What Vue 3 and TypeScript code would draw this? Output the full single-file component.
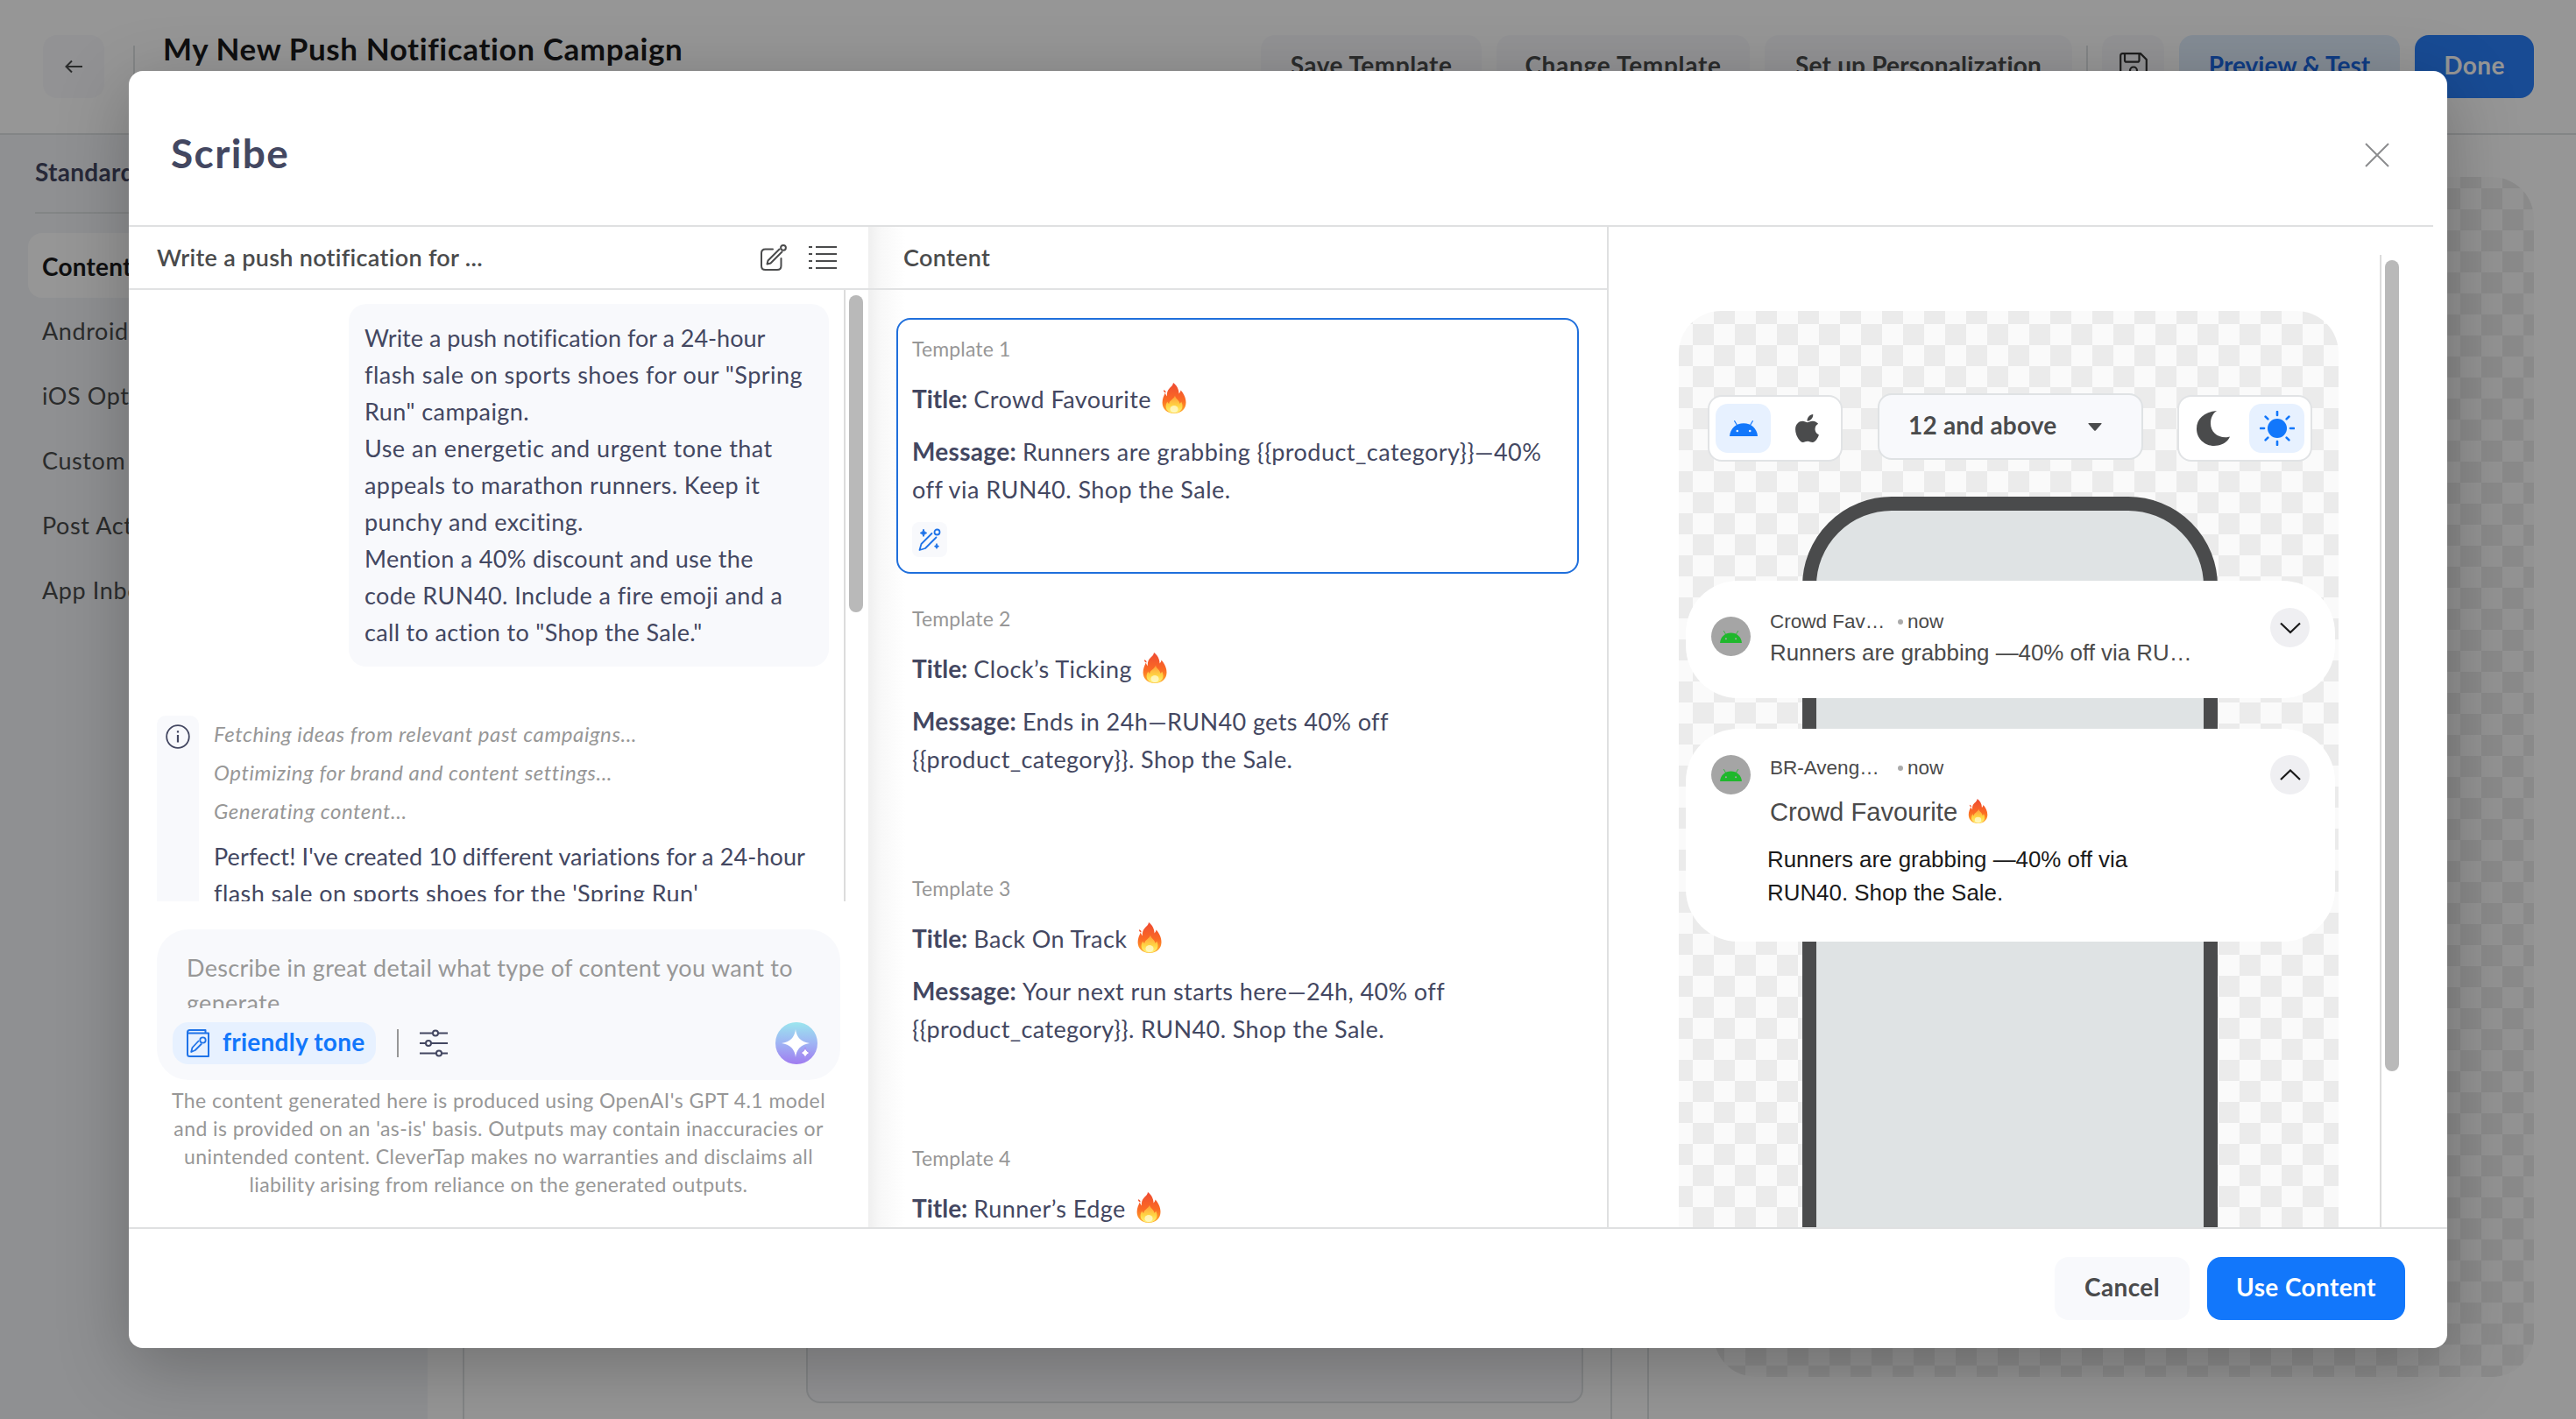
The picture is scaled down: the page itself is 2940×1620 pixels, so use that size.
<script setup lang="ts">
import { h, type FunctionalComponent } from 'vue'

interface Template {
  id: number
  title: string
  message: string[]
}

const sideItems: string[] = ['Content', 'Android', 'iOS Options', 'Custom Key Value', 'Post Action', 'App Inbox']

const prompt: string[] = [
  'Write a push notification for a 24-hour',
  'flash sale on sports shoes for our "Spring',
  'Run" campaign.',
  'Use an energetic and urgent tone that',
  'appeals to marathon runners. Keep it',
  'punchy and exciting.',
  'Mention a 40% discount and use the',
  'code RUN40. Include a fire emoji and a',
  'call to action to "Shop the Sale."',
]

const steps: string[] = [
  'Fetching ideas from relevant past campaigns...',
  'Optimizing for brand and content settings...',
  'Generating content...',
]

const reply: string[] = [
  "Perfect! I've created 10 different variations for a 24-hour",
  "flash sale on sports shoes for the 'Spring Run'",
]

const disclaimer: string[] = [
  "The content generated here is produced using OpenAI's GPT 4.1 model",
  "and is provided on an 'as-is' basis. Outputs may contain inaccuracies or",
  'unintended content. CleverTap makes no warranties and disclaims all',
  'liability arising from reliance on the generated outputs.',
]

const templates: Template[] = [
  { id: 1, title: 'Crowd Favourite', message: ['Runners are grabbing {{product_category}}—40%', 'off via RUN40. Shop the Sale.'] },
  { id: 2, title: 'Clock’s Ticking', message: ['Ends in 24h—RUN40 gets 40% off', '{{product_category}}. Shop the Sale.'] },
  { id: 3, title: 'Back On Track', message: ['Your next run starts here—24h, 40% off', '{{product_category}}. RUN40. Shop the Sale.'] },
  { id: 4, title: 'Runner’s Edge', message: [] },
]
const selectedId = 1

const rays: number[] = [0, 45, 90, 135, 180, 225, 270, 315]

const Flame: FunctionalComponent = () =>
  h('svg', { viewBox: '0 0 28 35', 'aria-label': 'fire' }, [
    h('path', { fill: 'url(#flameOuter)', d: 'M13 0c3.600 2.500 6.400 7 6.600 12.400 1-.9 1.700-2.200 1.900-3.800 3.200 3.400 6 8.500 6 14.200C27.500 30 22 35 14 35S.6 30 .6 22.800c0-4.600 1.800-7.900 3.200-11.200.6 1.700 1.200 3 2.200 3.800C5.400 11.600 6.500 8.400 9 6c2.200-2 3.700-3.600 4-6z' }),
    h('path', { fill: '#f4552f', d: 'M2 8.300c1.900.6 2.900 1.600 2.500 3.300-1.800-.7-2.800-1.800-2.500-3.300z' }),
    h('path', { fill: 'url(#flameInner)', d: 'M15 14.500c.4 3.700 4.900 5 5.400 9.200 1-.4 1.500-1.200 1.700-2.200 1.300 2.300 1.700 4.300 1.300 6.500-.7 4-4.400 6.600-9.400 6.600-5.500 0-9.100-2.900-9.400-7.100-.1-2 .5-4 1.800-6 .3 1.300.9 2.100 1.900 2.500-.2-3.900 5.700-5.200 6.700-9.500z' }),
    h('ellipse', { fill: '#fffbd6', opacity: 0.75, cx: 14, cy: 30, rx: 4.6, ry: 4 }),
  ])

const Android: FunctionalComponent<{ eye: string }> = (props) =>
  h('svg', { viewBox: '0 0 32 18' }, [
    h('path', { fill: 'currentColor', d: 'M0 18C.6 9 7.500 3.200 16 3.200S31.400 9 32 18z' }),
    h('path', { stroke: 'currentColor', 'stroke-width': 1.1, 'stroke-linecap': 'round', d: 'M5.600.6l3.100 5.200M26.400.6l-3.100 5.200' }),
    h('circle', { fill: props.eye, cx: 8.8, cy: 12, r: 1.3 }),
    h('circle', { fill: props.eye, cx: 23.2, cy: 12, r: 1.3 }),
  ])
Android.props = ['eye']
</script>

<template>
  <div class="screen">
    <svg class="defs" width="0" height="0">
      <defs>
        <linearGradient id="flameOuter" x1="0" y1="0" x2="0" y2="1">
          <stop offset="0" stop-color="#ee4a33" />
          <stop offset=".55" stop-color="#fb6a24" />
          <stop offset="1" stop-color="#ffae2b" />
        </linearGradient>
        <linearGradient id="flameInner" x1="0" y1="0" x2="0" y2="1">
          <stop offset="0" stop-color="#ff9a3a" />
          <stop offset=".6" stop-color="#ffd644" />
          <stop offset="1" stop-color="#fff27a" />
        </linearGradient>
        <linearGradient id="orb" x1="0" y1="0" x2="0" y2="1">
          <stop offset="0" stop-color="#9be6ee" />
          <stop offset=".5" stop-color="#9fb4f4" />
          <stop offset="1" stop-color="#a07cf0" />
        </linearGradient>
      </defs>
    </svg>

    <!-- editor page behind the dialog -->
    <header class="topbar">
      <button class="sq back">
        <svg viewBox="0 0 20 16" width="20" height="16" fill="none" stroke="#4a4b4c" stroke-width="2"><path d="M8 1.500L1.500 8 8 14.500M1.500 8H20" /></svg>
      </button>
      <i class="vsep" />
      <h1>My New Push Notification Campaign</h1>
      <div class="actions">
        <button class="b1">Save Template</button>
        <button class="b2">Change Template</button>
        <button class="b3">Set up Personalization</button>
        <i class="vsep" />
        <button class="sq">
          <svg viewBox="0 0 32 32" width="32" height="32" fill="none" stroke="#333" stroke-width="2.200"><path d="M1.200 3.500Q1.200 1.200 3.500 1.200H24L30.800 8v20.500q0 2.300-2.300 2.300h-25q-2.300 0-2.300-2.300zM6 1.200v7.500q0 2 2 2h12.500q2 0 2-2V1.200" /><circle cx="16" cy="20.500" r="4" /></svg>
        </button>
        <button class="preview">Preview &amp; Test</button>
        <button class="done">Done</button>
      </div>
    </header>
    <div class="page">
      <nav class="side">
        <h2>Standard</h2>
        <a v-for="(s, i) in sideItems" :key="s" :class="{ on: i === 0 }">{{ s }}</a>
      </nav>
      <div class="editor"><div class="field" /></div>
      <div class="gutter" />
      <div class="stage"><div class="checker" /></div>
    </div>

    <!-- dialog -->
    <div class="overlay">
      <section class="modal">
        <header class="mhead">
          <h2>Scribe</h2>
          <svg viewBox="0 0 28 28" width="28" height="28" fill="none" stroke="#8b8c8e" stroke-width="2"><path d="M1 1l26 26M27 1L1 27" /></svg>
        </header>

        <div class="body">
          <div class="chatcol">
            <div class="sub">
              <span class="subt">Write a push notification for ...</span>
              <svg class="compose" viewBox="0 0 32 32" width="32" height="32" fill="none" stroke="#4a4b4c" stroke-width="2" stroke-linejoin="round" stroke-linecap="round"><path d="M15 6.500H6.500Q2 6.500 2 11v14.500Q2 30 6.500 30H20q4.500 0 4.500-4.500V17M22.500 6.500L9.500 19.500 8.500 23.500l4-1L25.500 9.500" /><circle cx="27" cy="4.800" r="2.900" /></svg>
              <svg viewBox="0 0 32 28" width="32" height="28" stroke="#4a4b4c" stroke-width="2.200"><path d="M0 2h4M8 2h24M0 10h4M8 10h24M0 18h4M8 18h24M0 26h4M8 26h24" /></svg>
            </div>
            <div class="scroll">
              <div class="chat">
                <div class="bubble"><p v-for="l in prompt" :key="l">{{ l }}</p></div>
                <div class="answer">
                  <div class="strip">
                    <svg viewBox="0 0 28 28" width="28" height="28" fill="none" stroke="#434761" stroke-width="1.800"><circle cx="14" cy="14" r="12.800" /><path d="M14 12v8.500M14 7.200v2.400" stroke-width="2.200" /></svg>
                  </div>
                  <div>
                    <p v-for="l in steps" :key="l" class="step">{{ l }}</p>
                    <div class="reply"><p v-for="l in reply" :key="l">{{ l }}</p></div>
                  </div>
                </div>
              </div>
              <div class="track"><i /></div>
            </div>
            <div class="composer">
              <div class="ph"><p>Describe in great detail what type of content you want to</p><p>generate</p></div>
              <div class="tools">
                <span class="chip">
                  <svg viewBox="0 0 26 32" width="26" height="32" fill="none" stroke="#1f73e8" stroke-width="2" stroke-linejoin="round"><path d="M1 3.500Q1 1 3.500 1H21.500V4.500H3.500Q1 4.500 1 3.500V28.500Q1 31 3.500 31H25V4.500H21.500" /><path d="M14 13l-7.500 8-1.300 5 4.500-2 7.500-7.500" stroke-width="1.800" /><circle cx="18.500" cy="12.500" r="3.200" stroke-width="1.800" /></svg>
                  <b>friendly tone</b>
                </span>
                <i class="bar" />
                <svg viewBox="0 0 32 32" width="32" height="32" fill="none" stroke="#434761" stroke-width="2"><path d="M0 4.500h15M21 4.500h11M0 16h7M13 16h19M0 27.500h19M25 27.500h7" /><circle cx="18" cy="4.500" r="3" /><circle cx="10" cy="16" r="3" /><circle cx="22" cy="27.500" r="3" /></svg>
                <svg class="orb" viewBox="0 0 48 48" width="48" height="48"><circle cx="24" cy="24" r="24" fill="url(#orb)" /><path fill="#fff" d="M23 8Q24.500 22 39 24 24.500 26 23 40 21.500 26 7 24 21.500 22 23 8z" /><path fill="#fff" stroke="#a58df2" stroke-width="1" d="M34 28.500Q34.800 34 40 35 34.800 36 34 41.500 33.200 36 28 35 33.200 34 34 28.500z" /></svg>
              </div>
            </div>
            <div class="disc"><p v-for="l in disclaimer" :key="l">{{ l }}</p></div>
          </div>

          <div class="contentcol">
            <div class="sub"><span class="subt">Content</span></div>
            <div class="cards">
              <article v-for="t in templates" :key="t.id" :class="{ sel: t.id === selectedId }">
                <small>Template {{ t.id }}</small>
                <p class="tt"><b>Title:</b><span>{{ t.title }}</span><Flame class="flame" /></p>
                <p class="msg" v-for="(m, i) in t.message" :key="m"><b v-if="i === 0">Message:</b><span>{{ m }}</span></p>
                <span v-if="t.id === selectedId" class="wand">
                  <svg viewBox="0 0 26 26" width="26" height="26" fill="none" stroke="#1f73e8" stroke-width="1.800" stroke-linejoin="round" stroke-linecap="round"><path d="M15.500 6L3.500 18 1.500 25l6.500-2L20.500 10.500" /><circle cx="21.500" cy="4.500" r="3" /><path fill="#1f73e8" stroke-width="1" d="M6 1.500Q6.500 5 9.800 5.500 6.500 6 6 9.500 5.500 6 2.200 5.500 5.500 5 6 1.500zM21 18Q21.300 20.300 23.500 20.700 21.300 21 21 23.300 20.700 21 18.500 20.700 20.700 20.300 21 18z" /></svg>
                </span>
              </article>
            </div>
          </div>

          <div class="previewcol">
            <div class="device checker">
              <div class="controls">
                <div class="seg">
                  <span class="act"><Android class="droid" eye="#e7f1ff" /></span>
                  <span><svg viewBox="4 32 376 448" width="27" height="32" fill="#4a4b4c"><path d="M318.700 268.700c-.2-36.700 16.400-64.400 50-84.800-18.800-26.900-47.200-41.700-84.700-44.600-35.500-2.800-74.300 20.700-88.500 20.700-15 0-49.400-19.700-76.400-19.700C63.300 141.200 4 184.800 4 273.500q0 39.300 14.400 81.200c12.800 36.700 59 126.700 107.200 125.200 25.200-.6 43-17.900 75.800-17.900 31.800 0 48.300 17.900 76.400 17.900 48.600-.7 90.400-82.500 102.600-119.300-65.200-30.700-61.700-90-61.700-91.900zm-56.600-164.200c27.300-32.400 24.800-61.900 24-72.500-24.100 1.400-52 16.400-67.900 34.900-17.500 19.800-27.800 44.300-25.600 71.900 26.100 2 49.900-11.400 69.500-34.300z" /></svg></span>
                </div>
                <div class="select"><b>12 and above</b><svg viewBox="0 0 16 9" width="16" height="9" fill="#4a4b4c"><path d="M1 0h14q1 0 .4.900L8.800 8.500q-.8.700-1.600 0L.6.900Q0 0 1 0z" /></svg></div>
                <div class="seg theme">
                  <span><svg viewBox="0 0 38 40" width="38" height="40" fill="#4a4b4c"><path d="M23 0C8 1.500 0 9.500 0 20.500 0 31.500 9 40 20 40c9 0 15.500-4.500 18-10.500-1.500.6-3 .7-5 .7-10 0-17-6.500-17-16C16 8 18.500 3 23 0z" /></svg></span>
                  <span class="act"><svg viewBox="-20 -20 40 40" width="40" height="40"><circle r="11" fill="#1277fb" /><path v-for="r in rays" :key="r" :transform="`rotate(${r})`" d="M0-19v4" stroke="#1277fb" stroke-width="2.600" stroke-linecap="round" /></svg></span>
                </div>
              </div>
              <div class="stack">
                <div class="phone" />
                <div class="notifs">
                  <div class="notif n1">
                    <span class="avatar"><Android class="droid" eye="#a5a5a5" /></span>
                    <div class="ntext">
                      <p class="meta"><span>Crowd Fav…</span><i /><em>now</em></p>
                      <p class="line">Runners are grabbing —40% off via RU…</p>
                    </div>
                    <span class="chev"><svg viewBox="0 0 24 14" width="24" height="14" fill="none" stroke="#1a1a1a" stroke-width="2.200"><path d="M1 1.500l11 10.500L23 1.500" /></svg></span>
                  </div>
                  <div class="notif n2">
                    <span class="avatar"><Android class="droid" eye="#a5a5a5" /></span>
                    <div class="ntext">
                      <p class="meta"><span>BR-Aveng…</span><i /><em>now</em></p>
                      <p class="nt">Crowd Favourite<Flame class="flame" /></p>
                      <p class="nm">Runners are grabbing —40% off via</p>
                      <p class="nm">RUN40. Shop the Sale.</p>
                    </div>
                    <span class="chev"><svg viewBox="0 0 24 14" width="24" height="14" fill="none" stroke="#1a1a1a" stroke-width="2.200"><path d="M1 12L12 1.500 23 12" /></svg></span>
                  </div>
                </div>
              </div>
            </div>
            <div class="ptrack"><i /></div>
          </div>
        </div>

        <footer class="mfoot">
          <button class="cancel">Cancel</button>
          <button class="use">Use Content</button>
        </footer>
      </section>
    </div>
  </div>
</template>

<style>
body { margin: 0; background: #fff; overflow: hidden; }
</style>

<style scoped>
* { box-sizing: border-box; margin: 0; padding: 0; }
.screen { width: 2940px; height: 1620px; overflow: hidden; position: relative; font-family: Lato, "Liberation Sans", sans-serif; font-size: 27px; color: #434761; background: #fff; white-space: nowrap; display: flex; flex-direction: column; font-variant-ligatures: none; }
.defs { position: absolute; }
button { border: 0; font: inherit; font-size: 28px; letter-spacing: .4px; font-weight: 700; color: #4a4b4c; background: #f8f9fc; border-radius: 16px; height: 72px; white-space: nowrap; padding-bottom: 4px; }
svg { display: block; flex: none; }

.topbar { height: 154px; border-bottom: 2px solid #dfe2e4; display: flex; align-items: flex-start; padding: 40px 48px 0 49px; flex: none; }
.sq { width: 71px; display: flex; align-items: center; justify-content: center; padding: 0; }
.back { width: 70px; }
.vsep { width: 2px; height: 50px; margin-top: 12px; background: #dfe2e4; }
.back + .vsep { margin-left: 33px; }
h1 { margin-left: 32px; font-size: 35px; line-height: 44px; margin-top: -7px; color: #1b1b1c; letter-spacing: .6px; font-weight: 700; }
.actions { margin-left: auto; display: flex; }
.actions .b1 { width: 252px; margin-right: 17px; letter-spacing: .5px; }
.actions .b2 { width: 289px; margin-right: 17px; letter-spacing: .7px; }
.actions .b3 { width: 351px; margin-right: 16px; letter-spacing: .2px; }
.actions .vsep { margin-right: 16px; }
.preview { width: 252px; margin: 0 17px; background: #e1effe; color: #1a66e0; letter-spacing: 0; }
.done { width: 136px; background: #2a80fb; color: #fff; }

.page { flex: 1; display: flex; }
.side { width: 488px; background: #f3f5f9; padding: 20px 0 0 32px; display: flex; flex-direction: column; }
.side h2 { margin-left: 8px; font-size: 28px; line-height: 44px; height: 70px; color: #434761; border-bottom: 2px solid #dfe2e4; margin-bottom: 22px; letter-spacing: .3px; }
.side a { height: 74px; line-height: 74px; padding-left: 16px; color: #4a4b4c; letter-spacing: .6px; border-radius: 16px; padding-top: 1px; }
.side a.on { background: #fff; font-weight: 700; color: #1b1b1c; font-size: 28px; letter-spacing: .2px; }
.editor { margin-left: 40px; border: solid #dfe2e4; border-width: 0 2px; width: 1312px; padding-left: 390px; }
.field { width: 887px; height: 1448px; border: 2px solid #dfe2e4; border-radius: 16px; background: #f8f9fc; }
.gutter { width: 42px; border-right: 2px solid #dfe2e4; }
.stage { padding: 48px 0 0 74px; }
.stage .checker { width: 936px; height: 1370px; border-radius: 48px; background-position: -12px -11px; }
.checker { background: repeating-conic-gradient(#fafafa 0 25%, #ebebeb 0 50%) 0 0 / 48px 48px; }

.overlay { position: absolute; inset: 0; background: rgba(0, 0, 0, .41); display: flex; align-items: center; justify-content: center; }
.modal { width: 2646px; height: 1458px; border-radius: 16px; background: #fff; box-shadow: 0 20px 80px rgba(0, 0, 0, .25); display: flex; flex-direction: column; overflow: hidden; }
.mhead { height: 178px; margin-right: 16px; border-bottom: 2px solid #dfe0e1; padding: 0 50px 0 48px; display: flex; align-items: center; justify-content: space-between; flex: none; }
.mhead h2 { font-size: 46px; line-height: 60px; margin-top: 12px; letter-spacing: 1.400px; }
.mhead svg { margin-top: 16px; }
.body { height: 1142px; display: flex; overflow: hidden; flex: none; }
.sub { height: 72px; border-bottom: 2px solid #e1e2e3; display: flex; align-items: center; padding-left: 32px; flex: none; }
.subt { font-weight: 600; font-size: 27px; color: #4a4b4c; line-height: 40px; margin-top: -1px; letter-spacing: .3px; }

.chatcol { width: 844px; flex: none; display: flex; flex-direction: column; }
.chatcol .compose { margin-left: auto; margin-right: 24px; }
.chatcol .sub { padding-right: 36px; }
.scroll { height: 698px; display: flex; overflow: hidden; flex: none; }
.chat { width: 816px; padding: 16px 17px 0 32px; }
.bubble { width: 548px; height: 414px; margin-left: auto; background: #f8f9fc; border-radius: 20px; padding: 18px 18px 0; }
.bubble p { line-height: 42px; letter-spacing: .42px; }
.bubble p:first-child { letter-spacing: 0; }
.bubble p:nth-child(2), .bubble p:nth-child(4) { letter-spacing: .48px; }
.bubble p:nth-child(7), .bubble p:nth-child(9) { letter-spacing: .33px; }
.answer { display: flex; gap: 17px; margin-top: 56px; height: 300px; }
.strip { width: 48px; background: #f8f9fc; border-radius: 10px; padding: 10px; }
.step { font-size: 24px; line-height: 44px; font-style: italic; color: #979797; letter-spacing: .55px; position: relative; top: -1px; }
.reply { margin-top: 8px; }
.reply p { line-height: 42px; letter-spacing: .42px; }
.reply p:first-child { letter-spacing: .1px; }
.track { width: 28px; border-left: 2px solid #dcdcdc; padding: 6px 0 0 4px; }
.track i { display: block; width: 16px; height: 362px; border-radius: 8px; background: #b9b9b9; }
.composer { width: 780px; height: 172px; margin: 32px 0 0 32px; border-radius: 36px; background: #f8f9fc; flex: none; }
.ph { padding: 24px 0 0 34px; height: 90px; overflow: hidden; color: #979797; letter-spacing: .3px; }
.ph p { line-height: 40px; }
.tools { margin-top: 16px; padding: 0 26px 0 18px; display: flex; align-items: center; }
.chip { width: 232px; height: 48px; border-radius: 18px; background: #e7f1ff; display: flex; align-items: center; gap: 15px; padding-left: 16px; color: #1277fb; }
.chip b { font-size: 28px; letter-spacing: .25px; margin-top: -4px; }
.bar { width: 2px; height: 32px; background: #979797; margin: 0 24px; }
.orb { margin-left: auto; }
.disc { margin-top: 7px; width: 780px; margin-left: 32px; font-size: 23px; color: #979797; display: flex; flex-direction: column; align-items: center; letter-spacing: .45px; }
.disc p { line-height: 32px; }
.disc p:last-child { letter-spacing: .36px; }

.contentcol { width: 845px; border-right: 2px solid #dfe0e1; flex: none; background: linear-gradient(to right, #efefef, #f8f8f8 14px, #fdfdfd 34px, #fff 42px); display: flex; flex-direction: column; overflow: hidden; }
.contentcol .sub { padding-left: 40px; }
.cards { padding: 32px 32px 0; display: flex; flex-direction: column; gap: 16px; }
article { height: 292px; width: 779px; border: 2px solid transparent; border-radius: 16px; padding: 16px; flex: none; }
article.sel { border-color: #1f6fdc; background: #fff; }
article b { font-size: 28px; letter-spacing: .3px; }
small { display: block; font-size: 23px; line-height: 34px; color: #979797; margin-bottom: 18px; letter-spacing: .15px; }
.tt { display: flex; line-height: 44px; height: 44px; margin-bottom: 16px; letter-spacing: .45px; align-items: baseline; }
.tt b { letter-spacing: 0; }
.tt span { margin-left: 7px; }
.flame { width: 28px; height: 35px; }
.tt .flame { margin: 0 0 0 12px; align-self: flex-start; position: relative; top: 4px; }
.msg { line-height: 44px; height: 44px; letter-spacing: .4px; display: flex; align-items: baseline; }
.msg b { margin-right: 7px; }
.sel .msg { letter-spacing: .47px; }
.wand { display: flex; width: 40px; height: 40px; margin-top: 15px; border-radius: 8px; background: #f8f9fc; align-items: center; justify-content: center; }

.previewcol { flex: 1; padding: 32px 0 0 80px; display: flex; }
.device { width: 753px; height: 1200px; margin-top: 64px; border-radius: 48px; background-position: -8px -9px; flex: none; padding-top: 94px; }
.controls { display: flex; padding-left: 33px; gap: 40px; align-items: flex-start; }
.seg { width: 154px; height: 76px; margin-top: 2px; border: 2px solid #e1e3e5; border-radius: 16px; background: #fff; display: flex; padding: 3px 7px; gap: 10px; align-items: center; justify-content: space-between; }
.seg.theme { margin-left: -1px; }
.seg span { width: 64px; height: 56px; border-radius: 14px; display: flex; align-items: center; justify-content: center; }
.seg .act { background: #e7f1ff; color: #1277fb; }
.seg .droid { width: 32px; height: 18px; }
.select { width: 303px; height: 76px; border: 2px solid #dfe2e4; border-radius: 16px; background: #f8f9fc; color: #4a4b4c; display: flex; align-items: center; padding: 0 45px 0 33px; justify-content: space-between; }
.select b { font-size: 28px; letter-spacing: .2px; margin-top: -4px; }
.stack { margin-top: 40px; display: grid; grid-template-columns: 753px; }
.phone, .notifs { grid-area: 1 / 1; }
.phone { margin-left: 141px; width: 474px; height: 1000px; border: 16px solid #4a4b4c; border-radius: 102px; background: #dfe3e4; }
.notifs { padding: 96px 0 0 8px; display: flex; flex-direction: column; gap: 35px; font-family: "Liberation Sans", Arial, sans-serif; color: #4a4a4a; }
.notif { width: 741px; border-radius: 60px; background: #fff; display: flex; align-items: flex-start; padding: 0 29px; }
.n1 { height: 134px; }
.n2 { height: 243px; }
.avatar { width: 45px; height: 45px; border-radius: 50%; background: #a5a5a5; color: #1fb82c; display: flex; align-items: center; justify-content: center; margin-top: 30px; }
.n1 .avatar { margin-top: 41px; }
.avatar .droid { width: 25px; height: 14px; }
.ntext { margin-left: 22px; flex: 1; padding-top: 32px; }
.n2 .ntext { padding-top: 30px; }
.meta { display: flex; align-items: center; font-size: 22.500px; line-height: 30px; }
.meta span { width: 146px; }
.meta i { width: 6px; height: 6px; border-radius: 50%; background: #aaa; margin-right: 5px; }
.meta em { font-style: normal; }
.line { font-size: 25.900px; line-height: 36px; margin-top: 2px; }
.nt { display: flex; font-size: 29.200px; line-height: 40px; margin-top: 15px; }
.nt .flame { width: 23px; height: 28px; margin: 5px 0 0 12px; }
.nm { font-size: 25.900px; line-height: 38px; color: #1a1a1a; margin-left: -3px; }
.nt + .nm { margin-top: 15px; }
.chev { width: 45px; height: 45px; border-radius: 50%; background: #efeff2; display: flex; align-items: center; justify-content: center; margin-top: 31px; }
.n2 .chev { margin-top: 30px; }
.ptrack { margin-left: 47px; border-left: 2px solid #dcdcdc; padding: 6px 0 0 4px; }
.ptrack i { display: block; width: 16px; height: 926px; border-radius: 8px; background: #b9b9b9; }

.mfoot { flex: 1; border-top: 2px solid #dfe0e1; display: flex; justify-content: flex-end; gap: 20px; padding: 32px 48px 0 0; }
.cancel { width: 154px; }
.use { width: 226px; background: #1277fb; color: #fff; }
</style>
